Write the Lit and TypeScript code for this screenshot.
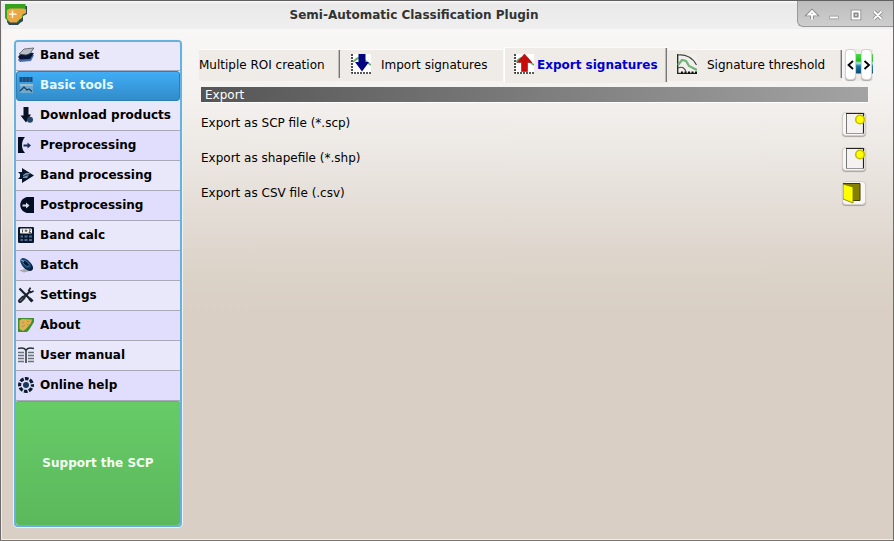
import { LitElement, html, css, svg, TemplateResult } from "lit";
import { customElement, property } from "lit/decorators.js";

const plot = svg`
  <rect width="20" height="20" fill="#fff"/>
  <path d="M1 0V19H20" fill="none" stroke="#222" stroke-width="1.6" stroke-dasharray="2 1"/>
  <path d="M2 8C5 5 7 3 10 4S16 9 20 11" fill="none" stroke="#58ad62" stroke-width="1.6"/>`;

const icons: Record<string, TemplateResult> = {
  bandset: svg`
    <path d="M0 13L4 8H16L13 14L2 15Z" fill="#4a6da8"/>
    <path d="M0 10L4 5L16 6L12 12L2 12.500Z" fill="#071637"/>
    <path d="M1 7L6 2L16 1L12 6.500L8 8Z" fill="#b9bec4" stroke="#444b55" stroke-width=".7"/>`,
  tools: svg`
    <rect x="1.500" y="0" width="13" height="5" fill="#1c4d7c"/>
    <path d="M4.500 0V5M8 0V5M11.500 0V5" stroke="#2f6fa3" stroke-width=".7"/>
    <rect x="2" y="7" width="13" height="9" fill="#6fa9cf"/>
    <path d="M2 8H15" stroke="#9dbccc" stroke-width="2"/>
    <path d="M2 14L6 10L9 13L11 12L14 14.500" fill="none" stroke="#173c5d" stroke-width="1.200"/>`,
  download: svg`
    <path d="M5.500 0H10.500V7.500H13L8 15.500L2.500 8.500H5.500Z" fill="#061225"/>
    <circle cx="12" cy="12.800" r="3" fill="#274665"/>`,
  pre: svg`
    <path d="M0 0H7C3 4 3 12 7 16H0Z" fill="#020f22"/>
    <path d="M5.500 7.500H9.500V5.500L13 8.500L9.500 11.500V9.500H5.500Z" fill="#1b3156"/>`,
  band: svg`
    <path d="M0 5H4V1L16 8.500L4 16V12H0L2 10V7Z" fill="#07162a"/>
    <path d="M5 8L8 6L12 6L9 11H5Z" fill="#7691ab"/><path d="M5 9.500L11 7.500" stroke="#17314b"/>`,
  post: svg`
    <path d="M16 0V16H9C0 14 0 2 9 0Z" fill="#020f22"/>
    <path d="M4.500 7.500H8V5.500L11.500 8.500L8 11.500V9.500H4.500Z" fill="#d7dceb"/>`,
  calc: svg`
    <rect width="16" height="16" rx="1.300" fill="#08172b"/>
    <rect x="2" y="1.500" width="12" height="5" rx="1" fill="#f2f2ef"/>
    <path d="M4.500 2.500V5.500M8 2.500V5M6.700 3.800H9.300M11 2.800H12.500L11 5.500H13" stroke="#333" stroke-width=".8" fill="none"/>
    <path d="M2.500 9.500H5M6.500 9.500H9.500M11 9.500H14M2.500 13H5M6.500 13H9.500M11 13H14" stroke="#52698f" stroke-width="2"/>`,
  batch: svg`
    <path d="M1 13.500L7 12L12 14L6 15.500Z" fill="#a8a9b0"/>
    <ellipse cx="9.200" cy="8.200" rx="7" ry="4.200" transform="rotate(43 9.200 8.200)" fill="#0b2038"/>
    <ellipse cx="7.700" cy="6.400" rx="6.500" ry="3.900" transform="rotate(43 7.700 6.400)" fill="#163f6b"/>
    <ellipse cx="8" cy="6.500" rx="4" ry="2" transform="rotate(43 8 6.500)" fill="#07182b" stroke="#3b78b0" stroke-width=".9"/>
    <path d="M3 3L6 4.500" stroke="#a6c6db" stroke-width=".8"/>`,
  settings: svg`
    <path d="M1.500 1.500L14 14" stroke="#18202c" stroke-width="2.200"/>
    <path d="M12.500 4L5 11" stroke="#18202c" stroke-width="2.200"/>
    <path d="M5.500 10.500L2 14" stroke="#242b36" stroke-width="4" stroke-linecap="round"/>
    <path d="M12.500 .6L10.800 3.500L12.500 5.500L15.600 4" fill="none" stroke="#18202c" stroke-width="1.700"/>
    <path d="M11.500 11.500L14.500 14.500" stroke="#18202c" stroke-width="3"/>
    <path d="M2 14L4.500 11.500" stroke="#7b8085" stroke-width=".9"/>`,
  about: svg`
    <path d="M0 1H16V5L11 13L9 15H0Z" fill="#3c9030"/>
    <path d="M1.500 3.500L4 2L14 2.500L13 6L8 12L5 14L1.500 12Z" fill="#deb14e"/>
    <path d="M4 6L6 5M9 4L11 5M4 10L7 8M9 8L10 7" stroke="#b38b68" stroke-width="1"/>`,
  manual: svg`
    <path d="M0 1.500C4 .5 7 1 8 3.500C9 1 12 .5 16 1.500M8 3V16" fill="none" stroke="#283238" stroke-width="1.500"/>
    <path d="M0 5.500H6M0 8.500H6M0 11.500H6M0 14.500H6M10 5.500H16M10 8.500H16M10 11.500H16M10 14.500H16" stroke="#6c7378" stroke-width="1.300"/>`,
  help: svg`
    <circle cx="8" cy="8" r="6.400" fill="none" stroke="#0a1b2b" stroke-width="3.200" stroke-dasharray="3.700 1.327" stroke-dashoffset="1.850"/>
    <circle cx="8" cy="8" r="3" fill="#1a395c"/>`,
};

const tabIcons: Record<string, TemplateResult> = {
  import: svg`${plot}<path d="M7.500 0H14.500V8H18L11 17.500L4 8H7.500Z" fill="#050580"/>`,
  export: svg`${plot}<path d="M7.500 17.500H13.500V8.500H18L10.500 0L3 8.500H7.500Z" fill="#c70b0b" stroke="#8d1515" stroke-width=".6"/>`,
  threshold: svg`
    <rect width="20" height="20" fill="#f1f0ed"/>
    <path d="M.7 0V19.300H20" fill="none" stroke="#222" stroke-width="1.300"/>
    <path d="M4 18.800H20" stroke="#111" stroke-width="2.400" stroke-dasharray="2 1.500"/>
    <path d="M1 1C9 0 16 4 19.500 11M1 14C5 12 8 14 9 18" fill="none" stroke="#444" stroke-width="1.100"/>
    <path d="M1 11L5 6L9 7L12 12L20 16" fill="none" stroke="#71b477" stroke-width="2.200"/>`,
};

@customElement("menu-row")
class MenuRow extends LitElement {
  @property() icon = "";
  @property() label = "";
  static styles = css`
    :host { display: flex; align-items: center; height: 29px; padding-left: 2px; gap: 6px;
      border-bottom: 1px solid #aaa9b9; background: #e9e7fa; font-weight: bold; color: #000; }
    :host([alt]) { background: #e0defc; }
    :host([active]) { background: linear-gradient(#40adf6, #318cc9); color: #e8f8ff;
      border: 1px solid #2c7eb5; border-radius: 3px; height: 28px; padding-left: 1px; }
    svg { width: 16px; height: 16px; flex: none; overflow: hidden; margin-top: -2px; }
    span { line-height: 16px; white-space: nowrap; margin-top: -2px; }
  `;
  render() {
    return html`<svg viewBox="0 0 16 16">${icons[this.icon]}</svg><span>${this.label}</span>`;
  }
}

@customElement("app-root")
class AppRoot extends LitElement {
  static styles = css`
    :host { display: flex; flex-direction: column; box-sizing: border-box; width: 894px; height: 541px;
      overflow: hidden; font: 12px "DejaVu Sans", sans-serif; color: #000; background: #d9cfc4;
      border: 1px solid #6e6a6b; border-top-color: #625f60; border-bottom-color: #777373; }
    .title { height: 28px; flex: none; display: flex; background: linear-gradient(#fafafa, #e9e9e9 3px, #efefef); box-sizing: border-box; }
    .logo { width: 22px; height: 22px; margin: 3px 0 0 4px; }
    .caption { flex: 1; text-align: center; font-weight: bold; line-height: 28px; color: #333; padding-left: 4px; }
    .controls { width: 96px; height: 26px; box-sizing: border-box; flex: none; background: linear-gradient(#bcbcbc, #cecece);
      border: solid #999; border-width: 0 0 1px 1px; border-radius: 0 0 0 6px; }
    .controls svg { display: block; width: 96px; height: 26px; }
    .body { flex: 1; display: flex; box-sizing: border-box; border: solid #f0eeec; border-width: 0 0 1px 1px;
      padding: 11px 20px 11px 12px; background: linear-gradient(#f8f7f6 0, #f5f3f1 55px, #eeeae6 110px, #e6e0da 165px, #dcd3c9 240px, #d9cfc4 285px); }
    .side { width: 168px; height: 487px; flex: none; box-sizing: border-box; display: flex; flex-direction: column;
      border: 2px solid #68b0de; border-radius: 4px; box-shadow: 0 0 0 1px #edf3f6; overflow: hidden; }
    menu-row:first-child { height: 28px; }
    .support { flex: 1; display: flex; align-items: center; justify-content: center; color: #f5fff5; font-weight: bold;
      background: linear-gradient(#66cc66, #5cb85c); border-radius: 3px; box-shadow: inset 0 1px #5eb75e; }
    .main { flex: 1; min-width: 0; padding-left: 17px; }
    .tabs { display: flex; height: 36px; padding-top: 7px; }
    .tab { display: flex; flex: none; align-items: center; box-sizing: border-box; height: 32px; margin-top: 2px; background: #efece8;
      border-top: 1px solid #fcfbfa; white-space: nowrap; }
    .tab svg { width: 20px; height: 20px; flex: none; margin-top: -3px; }
    .tab span { margin-top: -1px; flex: none; }
    .bar { align-self: flex-start; flex: none; width: 1px; height: 28px; background: #777; border-left: 1px solid #bbb; }
    .t1 { width: 142px; }
    .t1 span { width: 139px; }
    .t2 { width: 163px; padding-left: 10px; gap: 10px; border-right: 1px solid #faf9f7; }
    .t3 { width: 164px; height: 36px; margin-top: 0; padding-left: 9px; gap: 3px; color: #0000cd; font-weight: bold; border-left: 1px solid #fff; }
    .t3 span { width: 125px; }
    .t3 .bar { height: 34px; }
    .t4 { width: 174px; padding-left: 9px; gap: 10px; }
    .t4 span { width: 123px; }
    .scroll { display: flex; flex: none; width: 28px; height: 32px; margin-left: 3px; margin-top: 2px;
      background: linear-gradient(#efece8 5px, #48dd39 5px, #22bd29 12px, #b9e5ed 14px, #18819d 17px, #0b4874 24px, #efece8 25px); }
    .arrow { width: 11px; height: 31px; display: flex; align-items: center; justify-content: center; box-sizing: border-box;
      background: #fff; border: 1px solid #d5d1cd; border-radius: 4px; box-shadow: 0 1px 1px #aaa; }
    .arrow:last-child { margin-left: 5px; }
    .arrow svg { width: 9px; height: 10px; flex: none; }
    .head { width: 667px; box-sizing: border-box; height: 16px; margin: 4px 0 0 2px; padding-left: 4px; line-height: 16px;
      border-bottom: 1px solid #fff; box-shadow: 1px 0 #f8f6f4; color: #fff; background: linear-gradient(90deg, #555, #a3a3a3); }
    .row { display: flex; justify-content: space-between; align-items: center; height: 35px; width: 665px; margin-left: 2px; }
    .list { padding-top: 2px; }
    .row span { margin-top: 1px; }
    .btn { width: 24px; height: 24px; margin-top: 3px; box-sizing: border-box; border: 1px solid #d3cdc7; border-radius: 4px;
      background: #f8f7f5; box-shadow: 0 1px 1px #aaa39d; }
    .row:last-child .btn { margin-top: 1px; }
    .btn svg { display: block; width: 22px; height: 22px; }
  `;

  private menu: [string, string][] = [
    ["bandset", "Band set"], ["tools", "Basic tools"], ["download", "Download products"],
    ["pre", "Preprocessing"], ["band", "Band processing"], ["post", "Postprocessing"],
    ["calc", "Band calc"], ["batch", "Batch"], ["settings", "Settings"],
    ["about", "About"], ["manual", "User manual"], ["help", "Online help"],
  ];

  private page = svg`
    <rect x="3" y="0" width="17" height="20.500" fill="#f4f3f2"/>
    <path d="M3.500 0V20.500" stroke="#777" stroke-width="1"/><path d="M3 20.500H20" stroke="#999"/>
    <path d="M3 .5H20.500V20.500" fill="none" stroke="#222" stroke-width="1.200"/>
    <circle cx="17" cy="6.500" r="4.300" fill="#ffff00" stroke="#c4bd00" stroke-width="1.600"/>`;

  private folder = svg`
    <path d="M0 1H17V18.500H7L0 14Z" fill="#858000"/>
    <path d="M0 1.500H17V18.500H10" fill="none" stroke="#3f3d00"/>
    <path d="M0 2L10 5V21L0 17Z" fill="#ffff00" stroke="#777300" stroke-width=".8"/>`;

  render() {
    return html`
      <div class="title">
        <svg class="logo" viewBox="0 0 22 22">
          <path d="M2 7V18L4 21H13L15 19L18 17V12L22 10V2H19Z" fill="#2c4a50"/>
          <path d="M0 0H20.500V7L18 9V13L14 15V17.500H3L0 14Z" fill="#36a01f"/>
          <path d="M2 6L5 4.500H19L21 5.500V9L17 11V14L13 16.500L12 18.500H5L2 14.500Z" fill="#e9a843"/>
          <path d="M7.500 6.500V14M4 10.300H11.500" stroke="#fff3d7" stroke-width="1.500"/>
        </svg>
        <div class="caption">Semi-Automatic Classification Plugin</div>
        <div class="controls">
          <svg viewBox="0 0 96 26" fill="none" stroke="#8a8a8a" stroke-width="3.600">
            <path d="M14 18V13.500H10.500L14 10L17.500 13.500H14"/>
            <path d="M31.500 16.500H40.500M54.500 10.500H61.500V17.500H54.500ZM76 10.500L83.500 18M83.500 10.500L76 18"/>
            <g stroke="#fff" stroke-width="1.800">
              <path d="M14 18.500V13.500H10.500L14 10L17.500 13.500H14"/>
              <path d="M32 16.500H40M54.500 10.500H61.500V17.500H54.500ZM76 10.500L83.500 18M83.500 10.500L76 18"/>
            </g>
            <rect x="56.500" y="12.500" width="3" height="3" fill="#ccc" stroke="#8a8a8a" stroke-width="1"/>
          </svg>
        </div>
      </div>
      <div class="body">
        <div class="side">
          ${this.menu.map(([icon, label], i) => html`
            <menu-row icon=${icon} label=${label} ?alt=${i % 2 === 1} ?active=${i === 1}></menu-row>`)}
          <div class="support">Support the SCP</div>
        </div>
        <div class="main">
          <div class="tabs">
            <div class="tab t1"><span>Multiple ROI creation</span><div class="bar"></div></div>
            <div class="tab t2"><svg viewBox="0 0 20 20">${tabIcons.import}</svg><span>Import signatures</span></div>
            <div class="tab t3"><svg viewBox="0 0 20 20">${tabIcons.export}</svg><span>Export signatures</span><div class="bar"></div></div>
            <div class="tab t4"><svg viewBox="0 0 20 20">${tabIcons.threshold}</svg><span>Signature threshold</span><div class="bar"></div></div>
            <div class="scroll">
              <div class="arrow"><svg viewBox="0 0 9 10"><path d="M7 1L2.500 5L7 9" fill="none" stroke="#000" stroke-width="1.800"/></svg></div>
              <div class="arrow"><svg viewBox="0 0 9 10"><path d="M2.500 1L7 5L2.500 9" fill="none" stroke="#000" stroke-width="1.800"/></svg></div>
            </div>
          </div>
          <div class="head">Export</div>
          <div class="list">
            <div class="row"><span>Export as SCP file (*.scp)</span><div class="btn"><svg viewBox="0 0 22 22">${this.page}</svg></div></div>
            <div class="row"><span>Export as shapefile (*.shp)</span><div class="btn"><svg viewBox="0 0 22 22">${this.page}</svg></div></div>
            <div class="row"><span>Export as CSV file (.csv)</span><div class="btn"><svg viewBox="0 0 22 22">${this.folder}</svg></div></div>
          </div>
        </div>
      </div>`;
  }
}
